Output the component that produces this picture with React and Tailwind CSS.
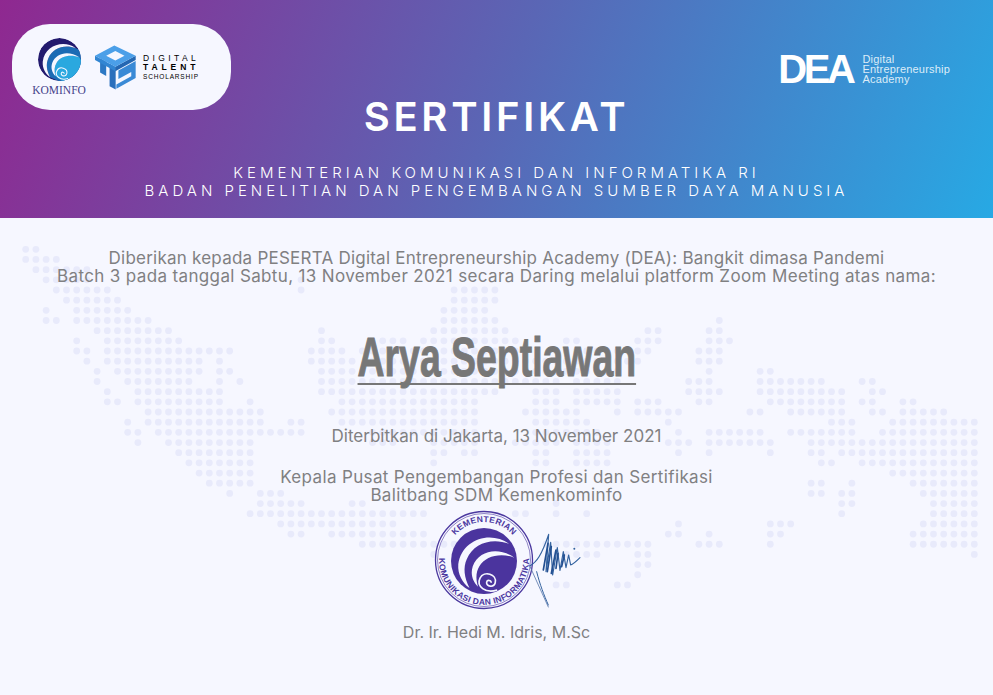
import React from "react";

const DOTS = {
  0: [[0, 1]],
  1: [[0, 3]],
  2: [[1, 6]],
  3: [[2, 6], [27, 27]],
  4: [[3, 8], [27, 27], [42, 46]],
  5: [[4, 9], [42, 46]],
  6: [[2, 2], [5, 10], [41, 45]],
  7: [[2, 3], [5, 12], [41, 46], [68, 68]],
  8: [[7, 14], [29, 29], [40, 47], [61, 62], [67, 68]],
  9: [[5, 5], [8, 15], [29, 30], [35, 37], [39, 48], [53, 54], [60, 62], [67, 69]],
  10: [[5, 6], [8, 20], [28, 31], [33, 49], [52, 61], [66, 68]],
  11: [[6, 6], [8, 17], [19, 19], [28, 32], [34, 60], [66, 68]],
  12: [[7, 7], [9, 17], [19, 20], [29, 58], [67, 67], [72, 73]],
  13: [[7, 7], [10, 16], [19, 19], [21, 21], [29, 52], [54, 58], [65, 67], [72, 78], [82, 83]],
  14: [[8, 8], [11, 19], [29, 46], [50, 52], [54, 58], [65, 68], [72, 80], [83, 84]],
  15: [[8, 9], [11, 19], [22, 22], [31, 44], [50, 52], [54, 58], [60, 62], [66, 67], [73, 80], [82, 83], [86, 87]],
  16: [[12, 23], [30, 44], [49, 54], [58, 58], [60, 64], [71, 72], [75, 80], [83, 84], [86, 90]],
  17: [[10, 10], [12, 23], [26, 27], [31, 44], [50, 55], [63, 63], [79, 81], [85, 93]],
  18: [[10, 11], [13, 27], [34, 44], [50, 56], [64, 64], [67, 72], [75, 81], [84, 93]],
  19: [[11, 11], [14, 22], [34, 36], [40, 44], [48, 52], [54, 57], [63, 65], [67, 73], [77, 93]],
  20: [[15, 22], [40, 41], [43, 44], [50, 51], [54, 57], [64, 64], [67, 67], [73, 73], [77, 78], [80, 93]],
  21: [[16, 22], [40, 40], [50, 51], [54, 57], [78, 79], [82, 93]],
  22: [[17, 22], [85, 93]],
  23: [[18, 22], [77, 78], [81, 81], [87, 93]],
  24: [[20, 20], [23, 25], [77, 78], [80, 81], [88, 93]],
  25: [[23, 27], [32, 33], [52, 52], [80, 81], [89, 93]],
  26: [[22, 39], [48, 49], [52, 52], [55, 55], [80, 80], [89, 93]],
  27: [[25, 36], [64, 64], [73, 75], [88, 93]],
  28: [[26, 27], [30, 39], [63, 64], [67, 67], [73, 74], [87, 93]],
  29: [[33, 42], [51, 61], [66, 68], [73, 73], [87, 93]],
  30: [[40, 40], [52, 56], [60, 61], [93, 93]],
  31: [[60, 61]],
  32: [[60, 60]],
  33: [[52, 53], [58, 59]],
};

const dotList = Object.entries(DOTS).flatMap(([row, runs]) =>
  runs.flatMap(([from, to]) =>
    Array.from({ length: to - from + 1 }, (_, i) => ({
      key: `${row}-${from + i}`,
      cx: 25.7 + 10.2 * (from + i),
      cy: 31.3 + 10.17 * Number(row),
    }))
  )
);

const DotMap = () => (
  <svg className="absolute inset-0 w-full h-full" viewBox="0 0 993 477">
    {dotList.map((d) => (
      <circle key={d.key} cx={d.cx} cy={d.cy} r="3.4" fill="#e8eafb" />
    ))}
  </svg>
);

const Arc1 = "M38 -26C10 -47 -34 -33 -39 5C-40 20 -33 33 -22 41C-30 25 -32 10 -26 -3C-16 -27 12 -36 38 -26Z";
const Arc2 = "M46 -5C22 -22 -8 -16 -17 8C-21 20 -17 31 -9 39C-13 27 -12 16 -7 8C2 -8 26 -13 46 -5Z";
const Spiral = "M20 44C2 50 -12 38 -6 26C0 14 20 20 17 33C15 41 3 39 4 32C5 28 11 29 11 33";

const KominfoLogo = () => (
  <div className="flex flex-col items-center w-[54px]">
    <svg width="43" height="43" viewBox="-50 -50 100 100">
      <defs>
        <clipPath id="globe">
          <circle r="50" />
        </clipPath>
      </defs>
      <g clipPath="url(#globe)">
        <circle r="50" fill="#231a6e" />
        <path d="M38 -26C12 -36 -16 -27 -26 -3C-32 10 -30 25 -22 41L20 60L60 20L50 -20Z" fill="#1c6bb4" />
        <path d="M46 -5C26 -13 2 -8 -7 8C-12 16 -13 27 -9 39L20 60L60 20Z" fill="#2aa8df" />
        <path d={Arc1} fill="#f6f7ff" />
        <path d={Arc2} fill="#f6f7ff" />
        <path d={Spiral} fill="none" stroke="#f6f7ff" strokeWidth="2.5" />
      </g>
    </svg>
    <span className="font-['Liberation_Serif',serif] text-[11.5px] leading-[13px] mt-[3px] text-[#45428a]">KOMINFO</span>
  </div>
);

const TalentCube = () => (
  <svg width="42" height="47" viewBox="12 8 124 138">
    <path d="M30 50L48 60V102L30 92Z" fill="#2c78c4" />
    <path d="M58 66L76 76V142L58 132Z" fill="#2a6fbc" />
    <path fillRule="evenodd" d="M84 86L135 58V108L78 140V127L122 103V90L84 111Z" fill="#3a8ad6" />
    <path d="M15 42V55L75 88V75Z" fill="#3185d2" />
    <path d="M135 42V55L75 88V75Z" fill="#2467b2" />
    <path fillRule="evenodd" d="M15 42L72 12L135 42L75 75ZM48 42L75 56L102 42L75 28Z" fill="#4b9fe8" />
  </svg>
);

const SealAndSignature = () => (
  <svg width="176" height="102" viewBox="0 0 176 102" className="font-['Liberation_Sans',sans-serif]">
    <defs>
      <path id="seal-top" d="M37 50A38 38 0 0 1 113 50" />
      <path id="seal-bottom" d="M34.2 31A45 45 0 1 0 115.8 31" />
    </defs>
    <circle cx="75" cy="50" r="48.5" fill="none" stroke="#4b389f" strokeWidth="1.3" />
    <circle cx="75" cy="50" r="46.5" fill="none" stroke="#4b389f" strokeWidth="0.6" />
    <text fontSize="8.5" fontWeight="700" fill="#4b389f" letterSpacing="0.3">
      <textPath href="#seal-top" startOffset="50%" textAnchor="middle">KEMENTERIAN</textPath>
    </text>
    <text fontSize="8.5" fontWeight="700" fill="#4b389f" letterSpacing="0.3">
      <textPath href="#seal-bottom" startOffset="50%" textAnchor="middle">KOMUNIKASI DAN INFORMATIKA</textPath>
    </text>
    <g transform="translate(75 51) scale(0.66)">
      <circle r="50" fill="#4b349e" />
      <path d={Arc1} fill="#f6f7ff" />
      <path d={Arc2} fill="#f6f7ff" />
      <path d={Spiral} fill="none" stroke="#f6f7ff" strokeWidth="2.5" />
    </g>
    {/* signature */}
    <g transform="translate(11 -5) scale(0.3333)" fill="none" strokeLinejoin="round" strokeLinecap="round">
      <path d="M330 182C350 172 365 150 386 88L378 200L392 112L398 210L412 128L420 196L430 140L438 188L446 150L452 180C460 178 472 166 480 158" stroke="#33629f" strokeWidth="3.5" />
      <path d="M370 195L384 115M382 200L394 125M394 205L408 135M408 190L414 145M425 185L433 150" stroke="#234f91" strokeWidth="5" />
      <path d="M328 180L385 306" stroke="#5c7aac" strokeWidth="2.5" />
      <path d="M350 200C360 240 372 270 385 300" stroke="#33629f" strokeWidth="3" />
      <circle cx="463" cy="131" r="3" fill="#33629f" stroke="none" />
    </g>
  </svg>
);

export default function App() {
  return (
    <div className="relative w-[993px] h-[695px] overflow-hidden bg-[#f6f7ff] font-['Inter',sans-serif]">
      <header className="h-[218px] bg-[linear-gradient(112deg,#8f2890_0%,#5a66b5_50%,#27a9e4_100%)] text-white">
        <div className="flex justify-between items-start pl-3 pr-[43px] pt-6">
          <div className="flex items-center w-[219px] h-[86px] rounded-[38px] bg-[#f6f7ff] pl-[20px]">
            <KominfoLogo />
            <div className="ml-[8px]">
              <TalentCube />
            </div>
            <div className="ml-[7px] flex flex-col text-black font-['Liberation_Sans',sans-serif] leading-none">
              <span className="text-[8.5px] tracking-[3.4px] leading-[9px]">DIGITAL</span>
              <span className="text-[8.5px] font-bold tracking-[3.9px] leading-[9px]">TALENT</span>
              <span className="text-[6.5px] tracking-[0.85px] leading-[9px]">SCHOLARSHIP</span>
            </div>
          </div>
          <div className="flex items-center mt-[30px] font-['Liberation_Sans',sans-serif]">
            <span className="text-[40px] leading-[30px] font-bold tracking-[-3.4px]">DEA</span>
            <div className="ml-[10px] flex flex-col text-[11px] leading-[10px] tracking-[0.2px] text-[#dcecf8]">
              <span>Digital</span>
              <span>Entrepreneurship</span>
              <span>Academy</span>
            </div>
          </div>
        </div>
        <h1 className="-mt-[16px] text-center text-[40px] leading-[46px] font-semibold tracking-[3.7px]">SERTIFIKAT</h1>
        <div className="mt-[24px] text-center text-[15px] leading-[18px] font-light tracking-[4px]">
          <p>KEMENTERIAN KOMUNIKASI DAN INFORMATIKA RI</p>
          <p>BADAN PENELITIAN DAN PENGEMBANGAN SUMBER DAYA MANUSIA</p>
        </div>
      </header>

      <main className="relative h-[477px]">
        <DotMap />
        <div className="relative flex flex-col items-center pt-[31px] text-[17px] leading-[18px] text-[#808082] text-center">
          <p className="tracking-[0.23px]">Diberikan kepada PESERTA Digital Entrepreneurship Academy (DEA): Bangkit dimasa Pandemi</p>
          <p className="tracking-[0.36px]">Batch 3 pada tanggal Sabtu, 13 November 2021 secara Daring melalui platform Zoom Meeting atas nama:</p>
          <div className="mt-[42px] h-[60px] flex justify-center">
            <span className="inline-block scale-x-[0.68] whitespace-nowrap font-['Liberation_Sans',sans-serif] text-[55px] leading-[60px] font-bold text-[#777777] [-webkit-text-stroke:1px_#777777] underline decoration-[2px] underline-offset-[7px] [text-decoration-skip-ink:none]">
              Arya Septiawan
            </span>
          </div>
          <p className="mt-[40px]">Diterbitkan di Jakarta, 13 November 2021</p>
          <p className="mt-[23px] tracking-[0.36px]">Kepala Pusat Pengembangan Profesi dan Sertifikasi</p>
          <p className="tracking-[0.36px]">Balitbang SDM Kemenkominfo</p>
          <div className="mt-[6px] h-[102px]">
            <SealAndSignature />
          </div>
          <p className="mt-[11px] text-[16px]">Dr. Ir. Hedi M. Idris, M.Sc</p>
        </div>
      </main>
    </div>
  );
}
